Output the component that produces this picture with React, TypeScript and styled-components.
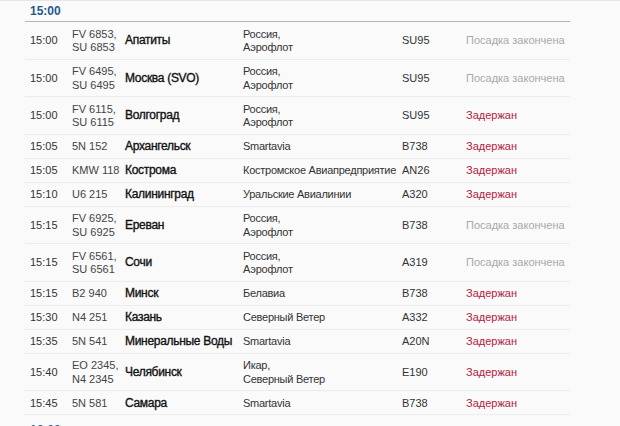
import React from "react";
import styled, { createGlobalStyle } from "styled-components";

const Global = createGlobalStyle`
  html, body { margin: 0; padding: 0; background: #fafafa; }
  body { font-family: "Liberation Sans", Arial, sans-serif; color: #333; }
`;

const Page = styled.div`
  border-top: 1px solid #e6e6e6;
  padding: 0 50px 0 25px;
  height: 425px;
  overflow: hidden;
`;

const Section = styled.section`
  & + & {
    margin-top: 5px;
  }
`;

const HourHeader = styled.div`
  height: 20px;
  line-height: 20px;
  padding-left: 5px;
  border-bottom: 1px solid #b5b5b5;
  color: #1f5b8e;
  font-weight: 700;
  font-size: 12px;
`;

const Row = styled.div`
  display: grid;
  grid-template-columns: 47px 53px 118px 159px 64px 1fr;
  align-items: center;
  padding: 5.5px 0 4px;
  border-bottom: 1px solid #ececec;
  font-size: 11px;
  line-height: 13.5px;
  white-space: nowrap;
`;

const Time = styled.div`
  padding-left: 5px;
  color: #333;
`;

const Flight = styled.div`
  color: #444;
`;

const City = styled.div`
  font-size: 12px;
  color: #111;
  -webkit-text-stroke: 0.35px #111;
  letter-spacing: -0.3px;
`;

const Airline = styled.div`
  color: #333;
  letter-spacing: -0.25px;
`;

const Aircraft = styled.div`
  color: #333;
`;

const Status = styled.div<{ $delayed: boolean }>`
  color: ${(p) => (p.$delayed ? "#b3203f" : "#a9a9a9")};
`;

type F = {
  t: string;
  fl: string[];
  city: string;
  al: string[];
  ac: string;
  st: "d" | "b";
};

const flights: F[] = [
  { t: "15:00", fl: ["FV 6853,", "SU 6853"], city: "Апатиты", al: ["Россия,", "Аэрофлот"], ac: "SU95", st: "b" },
  { t: "15:00", fl: ["FV 6495,", "SU 6495"], city: "Москва (SVO)", al: ["Россия,", "Аэрофлот"], ac: "SU95", st: "b" },
  { t: "15:00", fl: ["FV 6115,", "SU 6115"], city: "Волгоград", al: ["Россия,", "Аэрофлот"], ac: "SU95", st: "d" },
  { t: "15:05", fl: ["5N 152"], city: "Архангельск", al: ["Smartavia"], ac: "B738", st: "d" },
  { t: "15:05", fl: ["KMW 118"], city: "Кострома", al: ["Костромское Авиапредприятие"], ac: "AN26", st: "d" },
  { t: "15:10", fl: ["U6 215"], city: "Калининград", al: ["Уральские Авиалинии"], ac: "A320", st: "d" },
  { t: "15:15", fl: ["FV 6925,", "SU 6925"], city: "Ереван", al: ["Россия,", "Аэрофлот"], ac: "B738", st: "b" },
  { t: "15:15", fl: ["FV 6561,", "SU 6561"], city: "Сочи", al: ["Россия,", "Аэрофлот"], ac: "A319", st: "b" },
  { t: "15:15", fl: ["B2 940"], city: "Минск", al: ["Белавиа"], ac: "B738", st: "d" },
  { t: "15:30", fl: ["N4 251"], city: "Казань", al: ["Северный Ветер"], ac: "A332", st: "d" },
  { t: "15:35", fl: ["5N 541"], city: "Минеральные Воды", al: ["Smartavia"], ac: "A20N", st: "d" },
  { t: "15:40", fl: ["EO 2345,", "N4 2345"], city: "Челябинск", al: ["Икар,", "Северный Ветер"], ac: "E190", st: "d" },
  { t: "15:45", fl: ["5N 581"], city: "Самара", al: ["Smartavia"], ac: "B738", st: "d" },
];

const Lines = ({ items }: { items: string[] }) => (
  <>
    {items.map((s, i) => (
      <div key={i}>{s}</div>
    ))}
  </>
);

export default function App() {
  return (
    <>
      <Global />
      <Page>
        <Section>
          <HourHeader>15:00</HourHeader>
          {flights.map((f, i) => (
            <Row key={i}>
              <Time>{f.t}</Time>
              <Flight>
                <Lines items={f.fl} />
              </Flight>
              <City>{f.city}</City>
              <Airline>
                <Lines items={f.al} />
              </Airline>
              <Aircraft>{f.ac}</Aircraft>
              <Status $delayed={f.st === "d"}>
                {f.st === "d" ? "Задержан" : "Посадка закончена"}
              </Status>
            </Row>
          ))}
        </Section>
        <Section>
          <HourHeader>16:00</HourHeader>
        </Section>
      </Page>
    </>
  );
}
